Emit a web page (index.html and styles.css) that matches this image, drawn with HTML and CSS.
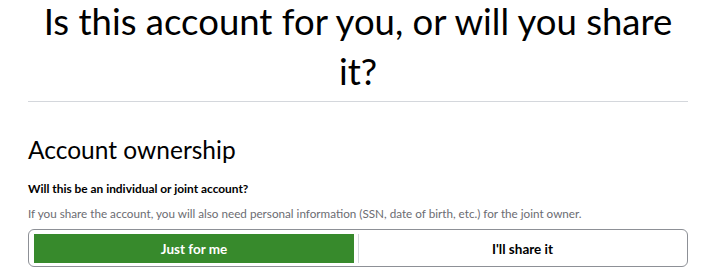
FILE: index.html
```html
<!DOCTYPE html>
<html lang="en">
<head>
<meta charset="utf-8">
<link rel="stylesheet" href="styles.css">
</head>
<body>
<main class="page">
  <h1 class="title">Is this account for you, or will you share it?</h1>
  <hr class="rule">
  <h2 class="section">Account ownership</h2>
  <p class="question">Will this be an individual or joint account?</p>
  <p class="hint">If you share the account, you will also need personal information (SSN, date of birth, etc.) for the joint owner.</p>
  <div class="toggle">
    <button class="opt opt-on" type="button">Just for me</button>
    <span class="sep"></span>
    <button class="opt" type="button">I'll share it</button>
  </div>
</main>
</body>
</html>
```
FILE: styles.css
```css
html, body {
  margin: 0;
  padding: 0;
  background: #fff;
}
body {
  font-family: Lato, "Noto Sans", sans-serif;
  color: #000;
}
.page {
  padding: 0 27px 0 28px;
}
.title {
  margin: -4px 0 0;
  font-size: 36.5px;
  font-weight: 400;
  line-height: 50px;
  text-align: center;
}
.rule {
  margin: 5px 0 0;
  border: 0;
  border-top: 1px solid #d4d7dc;
  height: 0;
}
.section {
  margin: 34px 0 0;
  font-size: 24.5px;
  font-weight: 400;
  line-height: 28px;
}
.question {
  margin: 17px 0 0;
  font-size: 11.9px;
  font-weight: 700;
  line-height: 16px;
}
.hint {
  margin: 8px 0 0;
  font-size: 11.7px;
  line-height: 16px;
  color: #6b6c72;
}
.toggle {
  margin-top: 8px;
  display: flex;
  align-items: stretch;
  border: 1px solid #8d9096;
  border-radius: 6px;
  padding: 4px 1px 3px 5px;
  height: 29px;
}
.opt {
  flex: 1;
  border: 0;
  background: transparent;
  font-family: inherit;
  font-size: 13.5px;
  font-weight: 700;
  color: #000;
  padding: 0;
}
.opt-on {
  flex: 0 0 320px;
  background: #378a2c;
  color: #fff;
}
.sep {
  width: 1px;
  background: #d4d7dc;
  margin: 0 0 0 4px;
}
```
